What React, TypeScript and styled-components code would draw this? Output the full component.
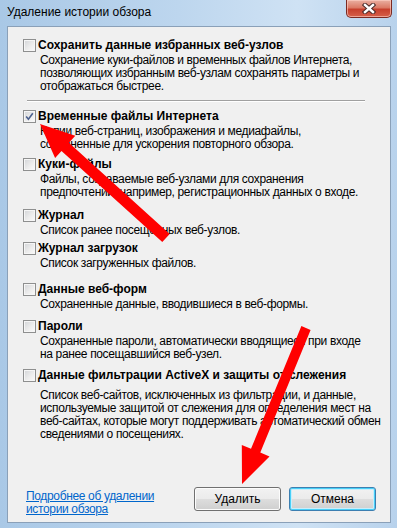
import React from "react";
import styled, { createGlobalStyle } from "styled-components";

const Global = createGlobalStyle`
  html, body { margin: 0; padding: 0; }
  body { width: 397px; height: 528px; overflow: hidden; font-family: "Liberation Sans", Arial, sans-serif; }
`;

const Window = styled.div`
  position: relative;
  width: 397px;
  height: 528px;
  display: flex;
  flex-direction: column;
  background: linear-gradient(to right, #a9c8e6 0%, #bdd6ee 45%, #cfe2f4 75%, #b8d2ec 100%);
  box-sizing: border-box;
`;

const TitleBar = styled.div`
  height: 26px;
  display: flex;
  align-items: flex-start;
  padding-left: 7px;
  box-sizing: border-box;
`;

const TitleText = styled.div`
  margin-top: 5px;
  font-size: 12px;
  line-height: 15px;
  color: #000;
`;

const CloseButton = styled.div`
  margin-left: auto;
  margin-right: 5px;
  width: 46px;
  height: 18px;
  box-sizing: border-box;
  border: 1px solid #7b2a22;
  border-top: none;
  border-radius: 0 0 5px 5px;
  background: linear-gradient(to bottom, #eab0a2 0%, #db7a66 45%, #c7402d 55%, #d6604a 100%);
  box-shadow: inset 0 0 0 1px rgba(255, 210, 200, 0.6);
  display: flex;
  align-items: center;
  justify-content: center;
`;

const Client = styled.div`
  flex: 1;
  margin: 0 6px 5px 7px;
  background: #f0f0f0;
  border: 1px solid #8aa0b8;
  display: flex;
  flex-direction: column;
  font-size: 12px;
  color: #000;
`;

const List = styled.div`
  padding: 0 13px 0 15px;
  display: flex;
  flex-direction: column;
`;

const Item = styled.div<{ $gap: number }>`
  margin-top: ${(p) => p.$gap}px;
  display: flex;
  flex-direction: column;
`;

const TitleRow = styled.label`
  display: flex;
  align-items: center;
  height: 15px;
`;

const Box = styled.span`
  width: 13px;
  height: 13px;
  box-sizing: border-box;
  border: 1px solid #8e8f8f;
  background: linear-gradient(135deg, #d2d4d7 0%, #ececec 55%, #fbfbfb 100%);
  box-shadow: inset 0 0 0 1px #f6f6f6;
  display: flex;
  align-items: center;
  justify-content: center;
  flex-shrink: 0;
`;

const ItemTitle = styled.span`
  margin-left: 2px;
  font-weight: bold;
  line-height: 15px;
  white-space: nowrap;
`;

const Desc = styled.div<{ $extra?: number }>`
  margin-top: ${(p) => 1 + (p.$extra || 0)}px;
  margin-left: 17px;
  line-height: 13px;
  letter-spacing: -0.35px;
  white-space: nowrap;
`;

const Separator = styled.div`
  margin: 7px 12px 0 4px;
  height: 1px;
  background: #a0a0a0;
  border-bottom: 1px solid #fff;
`;

const Footer = styled.div`
  margin-top: auto;
  display: flex;
  align-items: flex-start;
  padding: 0 14px 6px 18px;
`;

const Link = styled.a`
  margin-top: 3px;
  color: #0066cc;
  text-decoration: underline;
  line-height: 13px;
  letter-spacing: -0.35px;
  cursor: pointer;
`;

const Buttons = styled.div`
  margin-left: auto;
  display: flex;
  gap: 8px;
`;

const Button = styled.button<{ $focused?: boolean }>`
  width: 87px;
  height: 24px;
  box-sizing: border-box;
  font-family: "Liberation Sans", Arial, sans-serif;
  font-size: 12px;
  color: #000;
  border-radius: 3px;
  border: 1px solid ${(p) => (p.$focused ? "#3c7fb1" : "#707070")};
  background: linear-gradient(to bottom, #f2f2f2 0%, #ebebeb 48%, #dddddd 52%, #cfcfcf 100%);
  box-shadow: ${(p) =>
    p.$focused ? "inset 0 0 0 1px #48d0f8, inset 0 0 0 2px #c8eefc" : "inset 0 0 0 1px #fcfcfc"};
  padding: 0;
`;

const Overlay = styled.svg`
  position: absolute;
  left: 0;
  top: 0;
  pointer-events: none;
`;

type Entry = { title: string; lines: string[]; gap: number; checked?: boolean; extra?: number };

const entries: Entry[] = [
  { title: "Временные файлы Интернета", lines: ["Копии веб-страниц, изображения и медиафайлы,", "сохраненные для ускорения повторного обзора."], gap: 7, checked: true },
  { title: "Куки-файлы", lines: ["Файлы, создаваемые веб-узлами для сохранения", "предпочтений, например, регистрационных данных о входе."], gap: 6 },
  { title: "Журнал", lines: ["Список ранее посещенных веб-узлов."], gap: 9 },
  { title: "Журнал загрузок", lines: ["Список загруженных файлов."], gap: 4 },
  { title: "Данные веб-форм", lines: ["Сохраненные данные, вводившиеся в веб-формы."], gap: 12 },
  { title: "Пароли", lines: ["Сохраненные пароли, автоматически вводящиеся при входе", "на ранее посещавшийся веб-узел."], gap: 8 },
  {
    title: "Данные фильтрации ActiveX и защиты от слежения",
    lines: [
      "Список веб-сайтов, исключенных из фильтрации, и данные,",
      "используемые защитой от слежения для определения мест на",
      "веб-сайтах, которые могут поддерживать автоматический обмен",
      "сведениями о посещениях.",
    ],
    gap: 7,
    extra: 5,
  },
];

const Check = () => (
  <svg width="9" height="9" viewBox="0 0 9 9">
    <path d="M1.2 4.6 L3.4 7.2 L7.8 1.2" fill="none" stroke="#4a5f8e" strokeWidth="1.6" />
  </svg>
);

const CheckItem = ({ e }: { e: Entry }) => (
  <Item $gap={e.gap}>
    <TitleRow>
      <Box>{e.checked && <Check />}</Box>
      <ItemTitle>{e.title}</ItemTitle>
    </TitleRow>
    <Desc $extra={e.extra}>
      {e.lines.map((l, i) => (
        <div key={i}>{l}</div>
      ))}
    </Desc>
  </Item>
);

function arrow(tail: [number, number], tip: [number, number], w: number, headW: number, headL: number) {
  const dx = tip[0] - tail[0];
  const dy = tip[1] - tail[1];
  const len = Math.hypot(dx, dy);
  const ux = dx / len;
  const uy = dy / len;
  const px = -uy;
  const py = ux;
  const bx = tip[0] - ux * headL;
  const by = tip[1] - uy * headL;
  const pts = [
    [tail[0] + px * w / 2, tail[1] + py * w / 2],
    [bx + px * w / 2, by + py * w / 2],
    [bx + px * headW / 2, by + py * headW / 2],
    tip,
    [bx - px * headW / 2, by - py * headW / 2],
    [bx - px * w / 2, by - py * w / 2],
    [tail[0] - px * w / 2, tail[1] - py * w / 2],
  ];
  return pts.map((p) => p.map((v) => v.toFixed(1)).join(",")).join(" ");
}

export default function App() {
  return (
    <>
      <Global />
      <Window>
        <TitleBar>
          <TitleText>Удаление истории обзора</TitleText>
          <CloseButton>
            <svg width="14" height="11" viewBox="0 0 14 11">
              <path d="M3 2 L11 9 M11 2 L3 9" stroke="#4a2a28" strokeWidth="4.4" strokeLinecap="square" />
              <path d="M3 2 L11 9 M11 2 L3 9" stroke="#ffffff" strokeWidth="2.4" strokeLinecap="square" />
            </svg>
          </CloseButton>
        </TitleBar>
        <Client>
          <List>
            <Item $gap={11}>
              <TitleRow>
                <Box />
                <ItemTitle>Сохранить данные избранных веб-узлов</ItemTitle>
              </TitleRow>
              <Desc>
                <div>Сохранение куки-файлов и временных файлов Интернета,</div>
                <div>позволяющих избранным веб-узлам сохранять параметры и</div>
                <div>отображаться быстрее.</div>
              </Desc>
            </Item>
            <Separator />
            {entries.map((e, i) => (
              <CheckItem key={i} e={e} />
            ))}
          </List>
          <Footer>
            <Link>
              Подробнее об удалении
              <br />
              истории обзора
            </Link>
            <Buttons>
              <Button>Удалить</Button>
              <Button $focused>Отмена</Button>
            </Buttons>
          </Footer>
        </Client>
        <Overlay width="397" height="528" viewBox="0 0 397 528">
          <polygon points={arrow([166, 238], [40, 124], 11, 30, 34)} fill="#ff0000" />
          <polygon points={arrow([306, 328], [242, 484], 10, 30, 36)} fill="#ff0000" />
        </Overlay>
      </Window>
    </>
  );
}
